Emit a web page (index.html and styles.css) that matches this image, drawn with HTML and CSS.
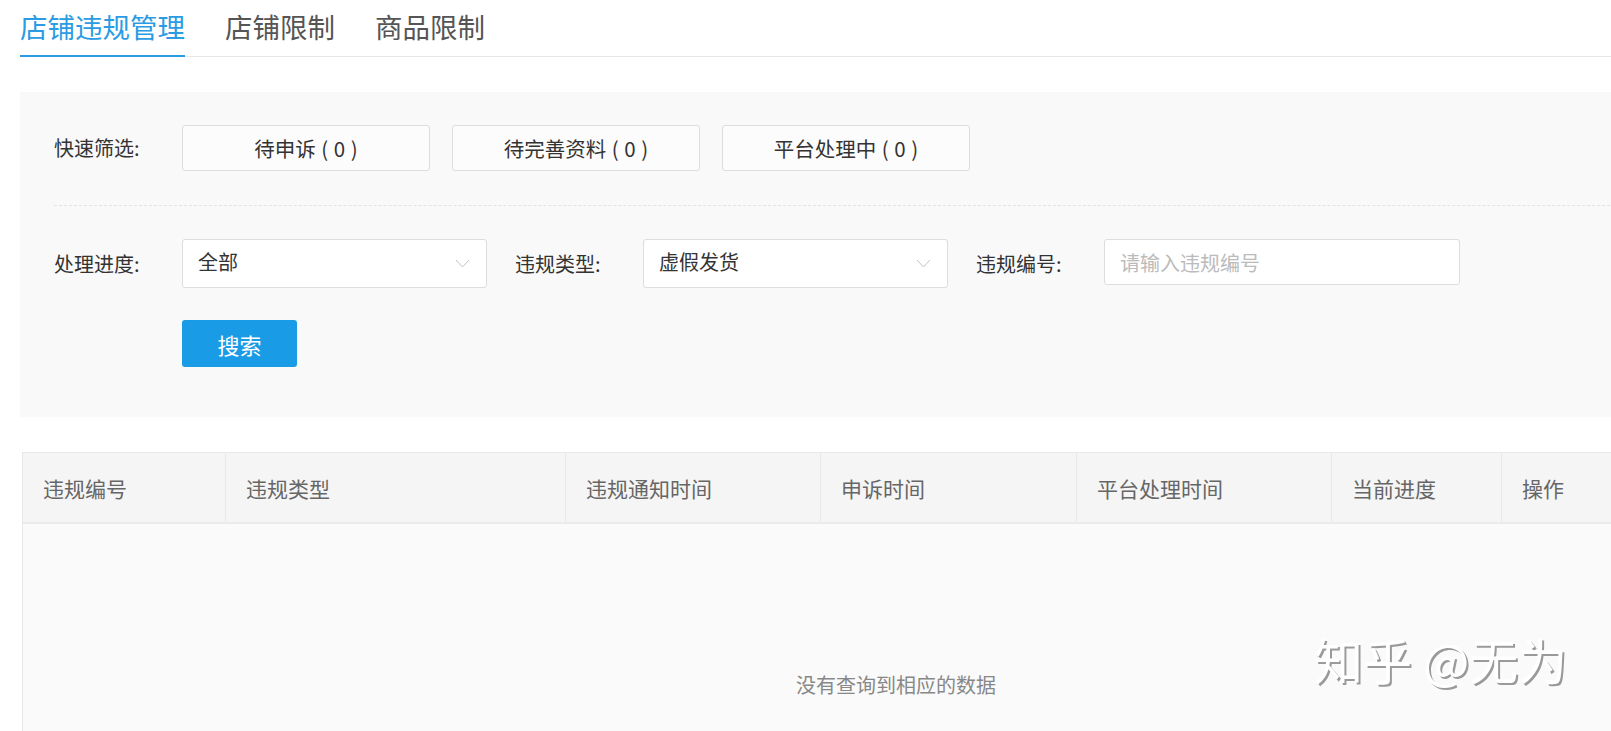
FILE: index.html
```html
<!DOCTYPE html>
<html lang="zh-CN">
<head>
    <meta charset="UTF-8">
    <title>店铺违规管理</title>
    <link rel="stylesheet" href="styles.css">
</head>
<body>
    <div class="page">
        <!-- Tabs -->
        <div class="tabs">
            <div class="tab active">店铺违规管理</div>
            <div class="tab">店铺限制</div>
            <div class="tab">商品限制</div>
        </div>

        <!-- Filter panel -->
        <div class="filter-panel">
            <div class="filter-row quick-row">
                <span class="filter-label">快速筛选:</span>
                <button class="quick-btn">待申诉 ( 0 )</button>
                <button class="quick-btn">待完善资料 ( 0 )</button>
                <button class="quick-btn">平台处理中 ( 0 )</button>
            </div>

            <div class="divider"></div>

            <div class="filter-row">
                <span class="filter-label">处理进度:</span>
                <div class="select">
                    <span>全部</span>
                    <svg class="chevron" width="15" height="9" viewBox="0 0 15 9"><polyline points="1,1 7.5,8 14,1" fill="none" stroke="#c4c4c4" stroke-width="1"/></svg>
                </div>
                <span class="filter-label">违规类型:</span>
                <div class="select">
                    <span>虚假发货</span>
                    <svg class="chevron" width="15" height="9" viewBox="0 0 15 9"><polyline points="1,1 7.5,8 14,1" fill="none" stroke="#c4c4c4" stroke-width="1"/></svg>
                </div>
                <span class="filter-label">违规编号:</span>
                <input class="text-input" type="text" placeholder="请输入违规编号">
            </div>

            <div class="filter-row search-row">
                <button class="search-btn">搜索</button>
            </div>
        </div>

        <!-- Result table -->
        <div class="table">
            <div class="table-head">
                <div class="th" style="width: 203px">违规编号</div>
                <div class="th" style="width: 340px">违规类型</div>
                <div class="th" style="width: 255px">违规通知时间</div>
                <div class="th" style="width: 256px">申诉时间</div>
                <div class="th" style="width: 255px">平台处理时间</div>
                <div class="th" style="width: 170px">当前进度</div>
                <div class="th last">操作</div>
            </div>
            <div class="table-empty">没有查询到相应的数据</div>
        </div>

        <div class="watermark">知乎 @无为</div>
    </div>
</body>
</html>
```

FILE: styles.css
```css
body {
    margin: 0;
    background: #fff;
    font-family: "Noto Sans CJK SC", "Microsoft YaHei", sans-serif;
    color: #333;
    overflow: hidden;
}

.page {
    position: relative;
    width: 1750px;
    padding-left: 20px;
}

/* tabs */
.tabs {
    display: flex;
    gap: 40px;
    border-bottom: 1px solid #e6e6e6;
}

.tab {
    font-size: 27.5px;
    line-height: 38px;
    padding: 7px 0 10px;
    color: #555;
    border-bottom: 2px solid transparent;
    margin-bottom: -1px;
}

.tab.active {
    color: #2b9be3;
    border-bottom-color: #2b9be3;
}

/* filter panel */
.filter-panel {
    margin-top: 35px;
    background: #f9f9f9;
    padding: 33px 0 50px 34px;
}

.filter-row {
    display: flex;
    align-items: flex-start;
}

.filter-label {
    width: 128px;
    flex-shrink: 0;
    font-size: 20px;
    line-height: 49px;
    color: #333;
}

.quick-row {
    align-items: center;
}

.quick-row .filter-label {
    line-height: 46px;
}

.quick-btn {
    width: 248px;
    height: 46px;
    margin-right: 22px;
    background: #fcfcfc;
    border: 1px solid #ddd;
    border-radius: 3px;
    font-family: inherit;
    font-size: 20.5px;
    color: #333;
    word-spacing: 1px;
}

.divider {
    border-top: 1px dashed #e3e3e3;
    margin: 34px 0 33px;
}

.select {
    width: 305px;
    height: 49px;
    box-sizing: border-box;
    background: #fff;
    border: 1px solid #ddd;
    border-radius: 3px;
    display: flex;
    align-items: center;
    justify-content: space-between;
    padding: 0 16px 0 15px;
    margin-right: 28px;
    font-size: 20px;
    color: #333;
}

.select span {
    margin-top: -5px;
}

.text-input {
    width: 356px;
    height: 46px;
    box-sizing: border-box;
    border: 1px solid #ddd;
    border-radius: 3px;
    padding: 0 15px;
    font-family: inherit;
    font-size: 20px;
    outline: none;
}

.text-input::placeholder {
    color: #bbb;
}

.search-row {
    margin-top: 32px;
    padding-left: 128px;
}

.search-btn {
    width: 115px;
    height: 47px;
    background: #1a9be6;
    border: none;
    border-radius: 3px;
    color: #fff;
    font-family: inherit;
    font-size: 22px;
}

/* table */
.table {
    margin: 35px 0 0 2px;
    border: 1px solid #e8e8e8;
    background: #fafafa;
}

.table-head {
    display: flex;
    height: 69px;
    background: #f5f5f5;
    border-bottom: 2px solid #ebebeb;
}

.th {
    box-sizing: border-box;
    padding-left: 20px;
    display: flex;
    align-items: center;
    font-size: 21px;
    color: #666;
    border-right: 1px solid #e8e8e8;
}

.th.last {
    flex: 1;
    border-right: none;
}

.table-empty {
    height: 260px;
    padding-top: 146px;
    box-sizing: border-box;
    text-align: center;
    font-size: 20px;
    color: #888;
}

.watermark {
    position: absolute;
    left: 1314px;
    top: 623px;
    font-size: 49px;
    color: #fff;
    text-shadow: 2px 2px 0 #9a9a9a;
}
```
